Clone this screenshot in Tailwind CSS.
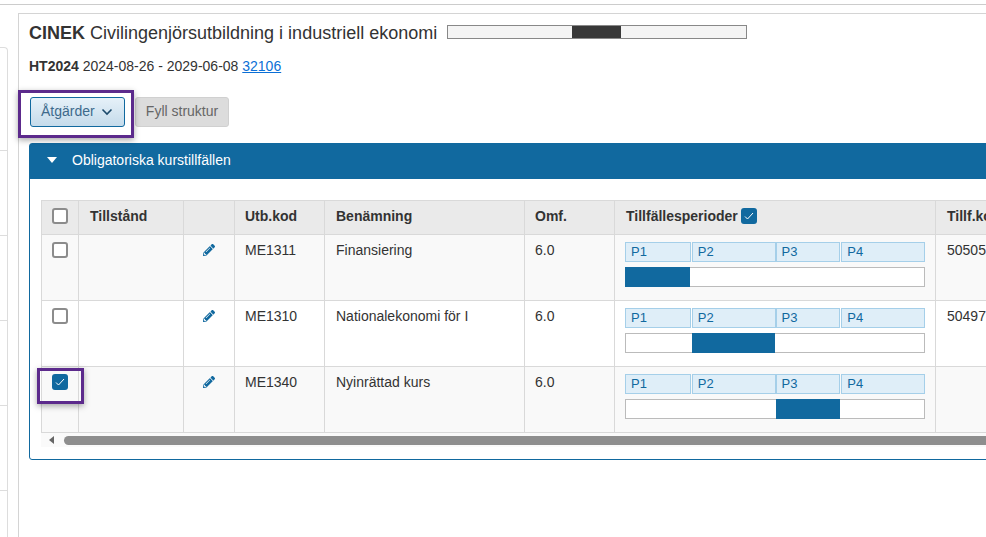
<!DOCTYPE html>
<html lang="sv">
<head>
    <meta charset="UTF-8">
    <meta name="viewport" content="width=device-width, initial-scale=1.0">
    <title>CINEK</title>
    <script src="https://cdn.jsdelivr.net/npm/@tailwindcss/browser@4"></script>
</head>
<body class="relative h-[537px] w-[986px] overflow-hidden bg-white font-['Liberation_Sans',Arial,sans-serif] text-sm text-[#333]">

<!-- Top rule -->
<div class="mt-1 h-[9px] border-t border-[#ccc]"></div>

<div class="flex h-[524px]">
    <!-- Left sidebar, mostly cut off -->
    <div class="mt-[34px] flex h-[490px] w-2 flex-col rounded-tr border-t border-r border-[#ddd]">
        <div class="h-[103px] shrink-0 border-b border-[#ddd]"></div>
        <div class="h-[85px] shrink-0 border-b border-[#ddd]"></div>
        <div class="h-[85px] shrink-0 border-b border-[#ddd]"></div>
        <div class="h-[85px] shrink-0 border-b border-[#ddd]"></div>
        <div class="h-[85px] shrink-0 border-b border-[#ddd]"></div>
    </div>

    <!-- Main panel -->
    <div class="ml-2.5 min-w-0 flex-1 overflow-hidden border-t border-l border-[#d4d4d4] pt-1.5 pl-2.5">
        <div class="flex h-6 items-center">
            <h1 class="mt-0.5 text-lg leading-6 font-normal whitespace-nowrap"><b>CINEK</b> Civilingenjörsutbildning i industriell ekonomi</h1>
            <div class="ml-2.5 flex h-3.5 w-[300px] border border-[#888] bg-[#f4f4f4]">
                <div class="ml-[124px] h-full w-[49px] bg-[#383838]"></div>
            </div>
        </div>
        <p class="mt-2.5 h-6 leading-6 whitespace-nowrap"><b>HT2024</b> 2024-08-26 - 2029-06-08 <a href="#" class="text-[#0b6fd6] underline">32106</a></p>

        <div class="mt-[19px] flex gap-2.5 pl-px">
            <button class="flex h-[30px] w-[95px] items-center gap-1.5 rounded-[3px] border border-[#11699f] bg-linear-to-b from-[#e6f1f9] to-[#c5dbeb] pb-0.5 pl-2.5 text-[#3d6a8c]">
                Åtgärder
                <svg class="mt-0.5 h-2 w-3" viewBox="0 0 12 8" fill="none" stroke="#1c4a6c" stroke-width="1.6"><path d="M1.5 1.5L6 6l4.5-4.5"/></svg>
            </button>
            <button class="h-[30px] w-[94px] rounded-[3px] border border-[#d0d0d0] bg-[#dcdcdc] pb-0.5 text-[#666]">Fyll struktur</button>
        </div>

        <!-- Course panel -->
        <div class="mt-4 h-[317px] w-[1100px] rounded-[3px] border border-[#11699f]">
            <div class="flex h-[35px] items-center bg-[#11699f] pb-1 pl-[17px] font-normal text-white">
                <svg class="h-1.5 w-2.5" viewBox="0 0 10 6" fill="#fff"><path d="M0 0h10L5 6z"/></svg>
                <span class="ml-[15px] whitespace-nowrap">Obligatoriska kurstillfällen</span>
            </div>

            <div class="pt-[21px] pl-[11px]">
                <table class="w-[1060px] table-fixed border-collapse text-left">
                    <colgroup>
                        <col class="w-[37px]"><col class="w-[105px]"><col class="w-[51px]"><col class="w-[90px]">
                        <col class="w-[200px]"><col class="w-[90px]"><col class="w-[321px]"><col>
                    </colgroup>
                    <thead>
                        <tr class="h-[34px] bg-[#eaeaea] font-bold">
                            <th class="border border-[#d9d9d9] pb-1 pl-[10px]"><span class="block size-4 rounded-[3px] border-2 border-[#8c8c8c] bg-white"></span></th>
                            <th class="border border-[#d9d9d9] pb-1 pl-[11px]">Tillstånd</th>
                            <th class="border border-[#d9d9d9]"></th>
                            <th class="border border-[#d9d9d9] pb-1 pl-2.5">Utb.kod</th>
                            <th class="border border-[#d9d9d9] pb-1 pl-[11px]">Benämning</th>
                            <th class="border border-[#d9d9d9] pb-1 pl-2.5">Omf.</th>
                            <th class="border border-[#d9d9d9] pb-1 pl-[11px]">
                                <span class="flex items-center gap-[3px]">Tillfällesperioder
                                    <span class="flex size-4 items-center justify-center rounded-[3px] bg-[#11699f]"><svg class="size-2.5" viewBox="0 0 10 10" fill="none" stroke="#fff" stroke-width="1"><path d="M1 5.5l2.5 2.5L9 2"/></svg></span>
                                </span>
                            </th>
                            <th class="border border-[#d9d9d9] pb-1 pl-[11px] whitespace-nowrap">Tillf.kod</th>
                        </tr>
                    </thead>
                    <tbody>
                        <tr class="h-[66px] bg-[#f9f9f9] align-top">
                            <td class="border border-[#d9d9d9] pt-[7px] pl-[10px]"><span class="block size-4 rounded-[3px] border-2 border-[#8c8c8c] bg-white"></span></td>
                            <td class="border border-[#d9d9d9]"></td>
                            <td class="border border-[#d9d9d9] pt-[9px] pl-[19px]"><svg class="size-3" viewBox="0 0 512 512" fill="#11699f"><path d="M497.9 142.1l-46.1 46.1c-4.7 4.7-12.3 4.7-17 0l-111-111c-4.7-4.7-4.7-12.3 0-17l46.1-46.1c18.7-18.7 49.1-18.7 67.9 0l60.1 60.1c18.8 18.7 18.8 49.1 0 67.9zM284.2 99.8L21.6 362.4.4 483.9c-2.9 16.4 11.4 30.6 27.8 27.8l121.5-21.3 262.6-262.6c4.7-4.7 4.7-12.3 0-17l-111-111c-4.8-4.7-12.4-4.7-17.1 0zM124.1 339.9c-5.5-5.5-5.5-14.3 0-19.8l154-154c5.5-5.5 14.3-5.5 19.8 0s5.5 14.3 0 19.8l-154 154c-5.5 5.5-14.3 5.5-19.8 0zM88 424h48v36.3l-64.5 11.3-31.1-31.1L51.7 376H88v48z"/></svg></td>
                            <td class="border border-[#d9d9d9] pt-[5px] pl-2.5">ME1311</td>
                            <td class="border border-[#d9d9d9] pt-[5px] pl-[11px]">Finansiering</td>
                            <td class="border border-[#d9d9d9] pt-[5px] pl-2.5">6.0</td>
                            <td class="border border-[#d9d9d9] pt-[7px] pl-2.5">
                                <div class="flex h-5 w-[300px] text-[13px] leading-[17px] text-[#11699f]">
                                    <span class="w-[66px] border border-[#a5cfe9] bg-[#dfeef8] pl-[5px]">P1</span>
                                    <span class="ml-px w-[84px] border border-[#a5cfe9] bg-[#dfeef8] pl-[5px]">P2</span>
                                    <span class="w-[65px] border border-[#a5cfe9] bg-[#dfeef8] pl-[5px]">P3</span>
                                    <span class="ml-px w-[84px] border border-[#a5cfe9] bg-[#dfeef8] pl-[5px]">P4</span>
                                </div>
                                <div class="mt-[5px] h-5 w-[300px] border border-[#bbb] bg-white"><div class="-mt-px -ml-px h-5 w-[65px] bg-[#11699f]"></div></div>
                            </td>
                            <td class="border border-[#d9d9d9] pt-[5px] pl-[11px]">50505</td>
                        </tr>
                        <tr class="h-[66px] bg-white align-top">
                            <td class="border border-[#d9d9d9] pt-[7px] pl-[10px]"><span class="block size-4 rounded-[3px] border-2 border-[#8c8c8c] bg-white"></span></td>
                            <td class="border border-[#d9d9d9]"></td>
                            <td class="border border-[#d9d9d9] pt-[9px] pl-[19px]"><svg class="size-3" viewBox="0 0 512 512" fill="#11699f"><path d="M497.9 142.1l-46.1 46.1c-4.7 4.7-12.3 4.7-17 0l-111-111c-4.7-4.7-4.7-12.3 0-17l46.1-46.1c18.7-18.7 49.1-18.7 67.9 0l60.1 60.1c18.8 18.7 18.8 49.1 0 67.9zM284.2 99.8L21.6 362.4.4 483.9c-2.9 16.4 11.4 30.6 27.8 27.8l121.5-21.3 262.6-262.6c4.7-4.7 4.7-12.3 0-17l-111-111c-4.8-4.7-12.4-4.7-17.1 0zM124.1 339.9c-5.5-5.5-5.5-14.3 0-19.8l154-154c5.5-5.5 14.3-5.5 19.8 0s5.5 14.3 0 19.8l-154 154c-5.5 5.5-14.3 5.5-19.8 0zM88 424h48v36.3l-64.5 11.3-31.1-31.1L51.7 376H88v48z"/></svg></td>
                            <td class="border border-[#d9d9d9] pt-[5px] pl-2.5">ME1310</td>
                            <td class="border border-[#d9d9d9] pt-[5px] pl-[11px]">Nationalekonomi för I</td>
                            <td class="border border-[#d9d9d9] pt-[5px] pl-2.5">6.0</td>
                            <td class="border border-[#d9d9d9] pt-[7px] pl-2.5">
                                <div class="flex h-5 w-[300px] text-[13px] leading-[17px] text-[#11699f]">
                                    <span class="w-[66px] border border-[#a5cfe9] bg-[#dfeef8] pl-[5px]">P1</span>
                                    <span class="ml-px w-[84px] border border-[#a5cfe9] bg-[#dfeef8] pl-[5px]">P2</span>
                                    <span class="w-[65px] border border-[#a5cfe9] bg-[#dfeef8] pl-[5px]">P3</span>
                                    <span class="ml-px w-[84px] border border-[#a5cfe9] bg-[#dfeef8] pl-[5px]">P4</span>
                                </div>
                                <div class="mt-[5px] h-5 w-[300px] border border-[#bbb] bg-white"><div class="-mt-px ml-[66px] h-5 w-[83px] bg-[#11699f]"></div></div>
                            </td>
                            <td class="border border-[#d9d9d9] pt-[5px] pl-[11px]">50497</td>
                        </tr>
                        <tr class="h-[66px] bg-[#f9f9f9] align-top">
                            <td class="border border-[#d9d9d9] pt-[7px] pl-[10px]"><span class="flex size-4 items-center justify-center rounded-[3px] bg-[#11699f]"><svg class="size-2.5" viewBox="0 0 10 10" fill="none" stroke="#fff" stroke-width="1"><path d="M1 5.5l2.5 2.5L9 2"/></svg></span></td>
                            <td class="border border-[#d9d9d9]"></td>
                            <td class="border border-[#d9d9d9] pt-[9px] pl-[19px]"><svg class="size-3" viewBox="0 0 512 512" fill="#11699f"><path d="M497.9 142.1l-46.1 46.1c-4.7 4.7-12.3 4.7-17 0l-111-111c-4.7-4.7-4.7-12.3 0-17l46.1-46.1c18.7-18.7 49.1-18.7 67.9 0l60.1 60.1c18.8 18.7 18.8 49.1 0 67.9zM284.2 99.8L21.6 362.4.4 483.9c-2.9 16.4 11.4 30.6 27.8 27.8l121.5-21.3 262.6-262.6c4.7-4.7 4.7-12.3 0-17l-111-111c-4.8-4.7-12.4-4.7-17.1 0zM124.1 339.9c-5.5-5.5-5.5-14.3 0-19.8l154-154c5.5-5.5 14.3-5.5 19.8 0s5.5 14.3 0 19.8l-154 154c-5.5 5.5-14.3 5.5-19.8 0zM88 424h48v36.3l-64.5 11.3-31.1-31.1L51.7 376H88v48z"/></svg></td>
                            <td class="border border-[#d9d9d9] pt-[5px] pl-2.5">ME1340</td>
                            <td class="border border-[#d9d9d9] pt-[5px] pl-[11px]">Nyinrättad kurs</td>
                            <td class="border border-[#d9d9d9] pt-[5px] pl-2.5">6.0</td>
                            <td class="border border-[#d9d9d9] pt-[7px] pl-2.5">
                                <div class="flex h-5 w-[300px] text-[13px] leading-[17px] text-[#11699f]">
                                    <span class="w-[66px] border border-[#a5cfe9] bg-[#dfeef8] pl-[5px]">P1</span>
                                    <span class="ml-px w-[84px] border border-[#a5cfe9] bg-[#dfeef8] pl-[5px]">P2</span>
                                    <span class="w-[65px] border border-[#a5cfe9] bg-[#dfeef8] pl-[5px]">P3</span>
                                    <span class="ml-px w-[84px] border border-[#a5cfe9] bg-[#dfeef8] pl-[5px]">P4</span>
                                </div>
                                <div class="mt-[5px] h-5 w-[300px] border border-[#bbb] bg-white"><div class="-mt-px ml-[150px] h-5 w-16 bg-[#11699f]"></div></div>
                            </td>
                            <td class="border border-[#d9d9d9]"></td>
                        </tr>
                    </tbody>
                </table>

                <!-- Horizontal scrollbar -->
                <div class="flex h-3.5 w-[1060px] items-center bg-[#fafafa]">
                    <svg class="ml-2 h-2 w-[5px]" viewBox="0 0 5 8" fill="#666"><path d="M5 0v8L0 4z"/></svg>
                    <div class="ml-2.5 h-[9px] flex-1 rounded-full bg-[#8e8e8e]"></div>
                </div>
            </div>
        </div>
    </div>
</div>

<!-- Help-guide highlights -->
<div class="absolute top-[90px] left-[18px] h-[48px] w-[116px] border-[3px] border-[#5c2a8c] shadow-[0_2px_6px_rgba(0,0,0,0.35)]"></div>
<div class="absolute top-[368px] left-[37px] h-[36px] w-[47px] border-[3px] border-[#5c2a8c] shadow-[0_2px_6px_rgba(0,0,0,0.35)]"></div>

</body>
</html>
